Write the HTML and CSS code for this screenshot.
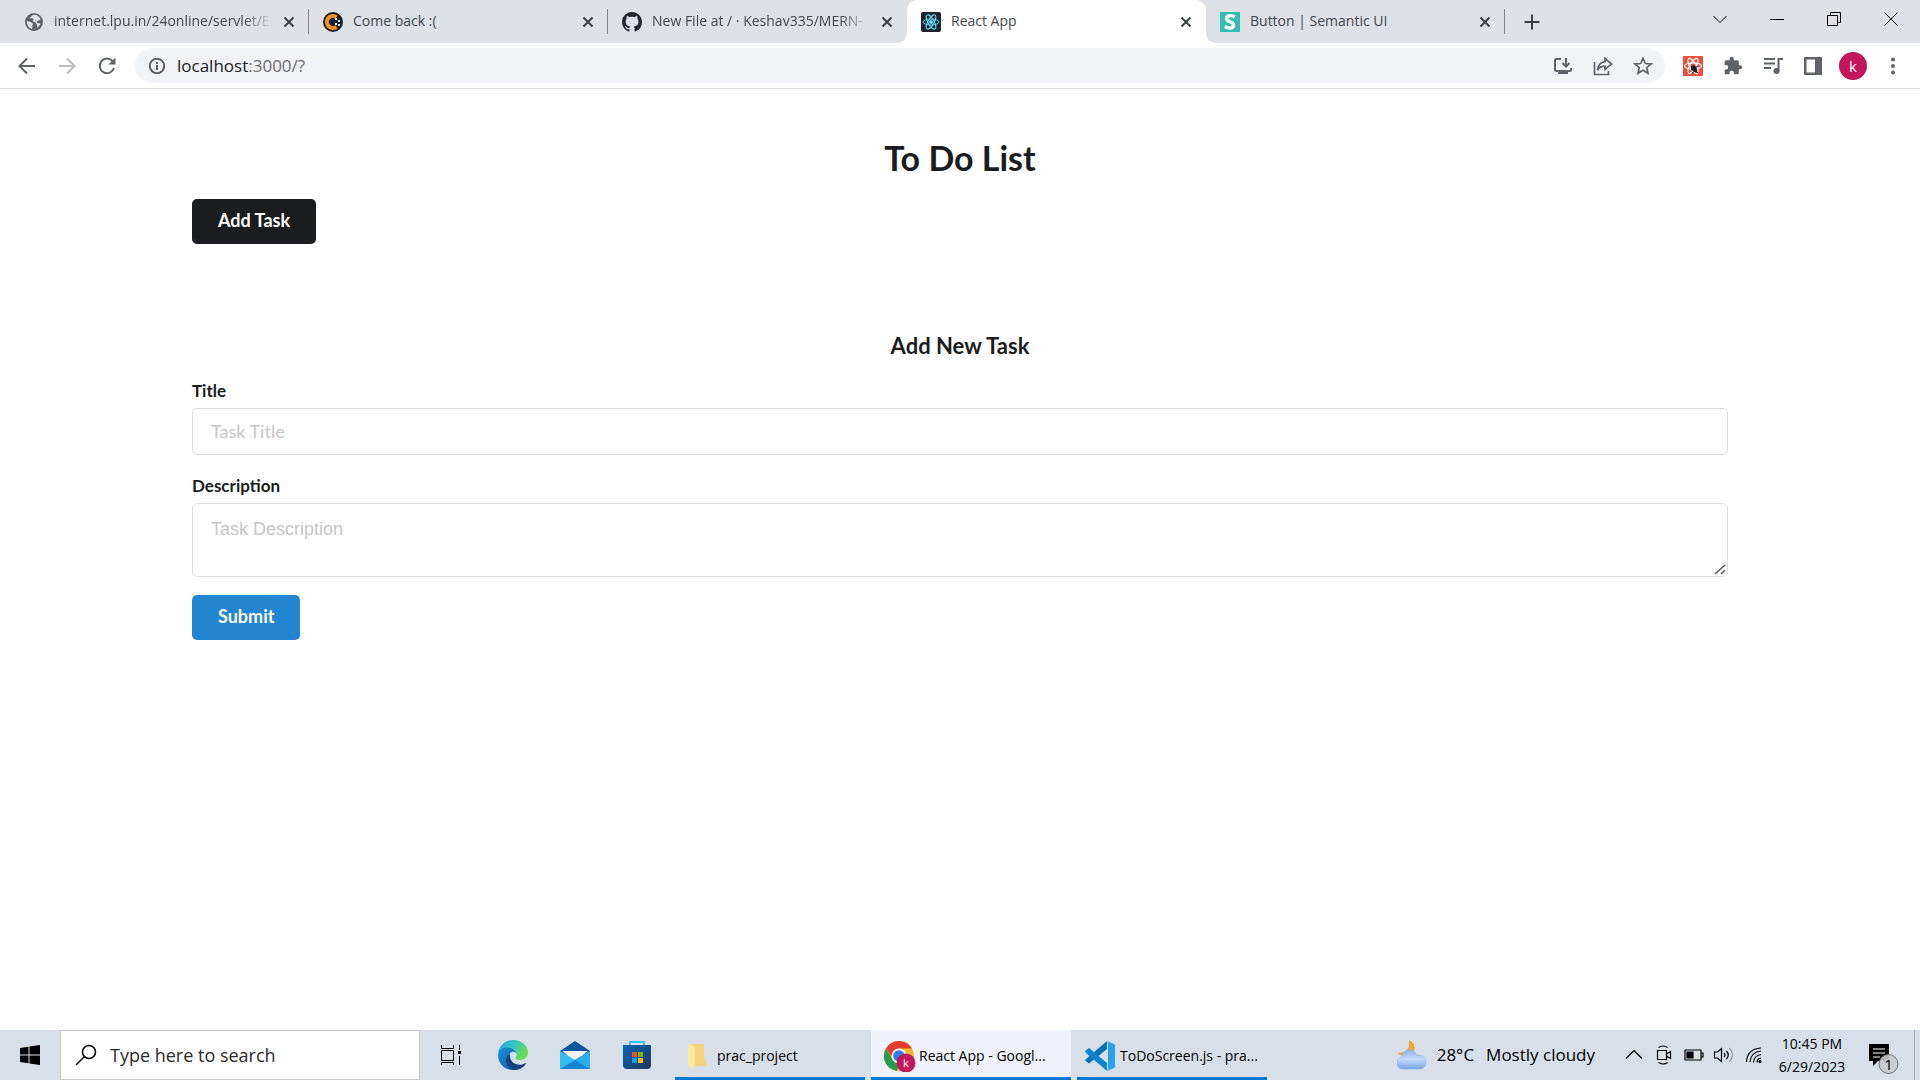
FILE: index.html
```html
<!DOCTYPE html>
<html lang="en">
<head>
<meta charset="utf-8">
<meta name="viewport" content="width=device-width, initial-scale=1">
<title>React App</title>
<link rel="stylesheet" href="styles.css">
</head>
<body>
<header class="browser">
  <div class="tab-strip">
    <div class="tab">
      <svg class="tab-icon" viewBox="0 0 20 20"><circle cx="10" cy="10" r="9" fill="#5f6368"/><path d="M3 9c2 0 3 1 4.500 1.500s2 1.500 1 2.500.5 2-.5 4C5 16 2.500 13 3 9zM9 3c3-1 6 1 7.500 4-1 2-2.500 1-3.500 2.500s1.500 2 3.500 1.500c-.5 2-1.500 3.500-3 4.500-1-1.500 0-3-1.500-4.500S8 9.500 9 8s-1-2-2.500-1.500S7 4 9 3z" fill="#dee1e6"/></svg>
      <a class="tab-title faded" href="#">internet.lpu.in/24online/servlet/E2</a>
      <button class="tab-close" aria-label="Close tab"><svg viewBox="0 0 12 12"><path d="M1.500 1.500l9 9M10.500 1.500l-9 9"/></svg></button>
    </div>
    <div class="tab">
      <svg class="tab-icon" viewBox="0 0 20 20"><circle cx="10" cy="10" r="10" fill="#17202e"/><path d="M13.500 5.200A6 6 0 1 0 13.500 14.800" fill="none" stroke="#f7931e" stroke-width="4"/><g fill="#fff"><rect x="12" y="6" width="2" height="2"/><rect x="15" y="8" width="2" height="2"/><rect x="15" y="12" width="2" height="2"/><rect x="12" y="11" width="2" height="2"/></g></svg>
      <a class="tab-title" href="#">Come back :(</a>
      <button class="tab-close" aria-label="Close tab"><svg viewBox="0 0 12 12"><path d="M1.500 1.500l9 9M10.500 1.500l-9 9"/></svg></button>
    </div>
    <div class="tab before-active">
      <svg class="tab-icon" viewBox="0 0 16 16"><path fill="#24292f" d="M8 0C3.580 0 0 3.580 0 8c0 3.540 2.290 6.530 5.470 7.590.4.070.55-.17.55-.38 0-.19-.01-.82-.01-1.490-2.010.37-2.530-.49-2.690-.94-.09-.23-.48-.94-.82-1.130-.28-.15-.68-.52-.01-.53.63-.01 1.080.58 1.230.82.72 1.210 1.870.87 2.330.66.070-.52.28-.87.51-1.070-1.780-.2-3.640-.89-3.640-3.950 0-.87.31-1.590.82-2.150-.08-.2-.36-1.020.08-2.120 0 0 .67-.21 2.200.82.64-.18 1.320-.27 2-.27s1.360.09 2 .27c1.530-1.040 2.200-.82 2.200-.82.44 1.100.16 1.920.08 2.120.51.56.82 1.270.82 2.150 0 3.070-1.870 3.750-3.650 3.950.29.25.54.73.54 1.480 0 1.070-.01 1.930-.01 2.200 0 .21.15.46.55.38A8.010 8.010 0 0 0 16 8c0-4.420-3.580-8-8-8z"/></svg>
      <a class="tab-title faded" href="#">New File at / · Keshav335/MERN-</a>
      <button class="tab-close" aria-label="Close tab"><svg viewBox="0 0 12 12"><path d="M1.500 1.500l9 9M10.500 1.500l-9 9"/></svg></button>
    </div>
    <div class="tab active">
      <svg class="tab-icon" viewBox="0 0 20 20"><rect width="20" height="20" rx="2" fill="#20232a"/><g fill="none" stroke="#61dafb"><ellipse cx="10" cy="10" rx="8" ry="3"/><ellipse cx="10" cy="10" rx="8" ry="3" transform="rotate(60 10 10)"/><ellipse cx="10" cy="10" rx="8" ry="3" transform="rotate(120 10 10)"/></g><circle cx="10" cy="10" r="2" fill="#61dafb"/></svg>
      <a class="tab-title" href="#">React App</a>
      <button class="tab-close" aria-label="Close tab"><svg viewBox="0 0 12 12"><path d="M1.500 1.500l9 9M10.500 1.500l-9 9"/></svg></button>
    </div>
    <div class="tab">
      <svg class="tab-icon" viewBox="0 0 20 20"><rect width="20" height="20" fill="#35bdb2"/><path d="M14.800 5C12 3 6.500 3 6.500 6.500 6.500 10.500 13.500 9 13.500 13 13.500 17 8 16.500 4.800 14.500" fill="none" stroke="#fff" stroke-width="3.400"/></svg>
      <a class="tab-title" href="#">Button | Semantic UI</a>
      <button class="tab-close" aria-label="Close tab"><svg viewBox="0 0 12 12"><path d="M1.500 1.500l9 9M10.500 1.500l-9 9"/></svg></button>
    </div>
    <button class="new-tab" aria-label="New tab"><svg viewBox="0 0 16 16"><path d="M8 .5v15M.5 8h15"/></svg></button>
    <div class="window-controls">
      <button aria-label="Search tabs"><svg viewBox="0 0 14 14"><path d="M.5 4L7 10.500 13.500 4"/></svg></button>
      <button aria-label="Minimize"><svg viewBox="0 0 14 14"><path d="M0 7.500h14"/></svg></button>
      <button aria-label="Restore"><svg viewBox="0 0 14 14"><path d="M.5 3.500h10v10H.5zM3.500 3V.5h10v10H11"/></svg></button>
      <button aria-label="Close"><svg viewBox="0 0 14 14"><path d="M.5.5l13 13M13.500.5l-13 13"/></svg></button>
    </div>
  </div>
  <div class="toolbar">
    <button class="tool" aria-label="Back"><svg class="line" viewBox="0 0 20 20"><path d="M18 10H3M10 2.500L2.500 10l7.500 7.500"/></svg></button>
    <button class="tool disabled" aria-label="Forward"><svg class="line" viewBox="0 0 20 20"><path d="M2 10h15M10 2.500l7.500 7.500-7.500 7.500"/></svg></button>
    <button class="tool" aria-label="Reload"><svg class="line" viewBox="0 0 20 20"><path d="M17 12A7.300 7.300 0 1 1 15.500 5"/><path d="M18.500 1.500v7h-7z" class="solid"/></svg></button>
    <div class="omnibox">
      <svg class="info" viewBox="0 0 16 16"><circle cx="8" cy="8" r="7.200"/><path d="M8 7v5M8 4v2"/></svg>
      <div class="url" role="textbox" aria-label="Address" contenteditable="true" spellcheck="false"><span class="host">localhost</span>:3000/?</div>
      <button class="tool" aria-label="Install app"><svg class="line" viewBox="0 0 20 20"><path d="M8 3H3.500A1.500 1.500 0 0 0 2 4.500v9A1.500 1.500 0 0 0 3.500 15h13a1.500 1.500 0 0 0 1.500-1.500V12M13 2v8M9.500 7l3.500 3.500L16.500 7M5 17h10"/></svg></button>
      <button class="tool" aria-label="Share"><svg class="line thin" viewBox="0 0 20 20"><path d="M1.500 6v12.500h14V15M12 2.500l6.500 5.500L12 13.500v-3.300c-4 0-6 1.500-7.500 4C5 9.700 7.500 6.200 12 5.700z"/></svg></button>
      <button class="tool" aria-label="Bookmark this tab"><svg class="line thin" viewBox="0 0 20 20"><path d="M10 2.300l2.300 5.200 5.700.5-4.300 3.700L15 17.300l-5-3-5 3 1.300-5.600L2 8l5.700-.5z"/></svg></button>
    </div>
    <button class="tool" aria-label="React developer tools"><svg viewBox="0 0 20 20"><rect width="20" height="20" rx="1" fill="#e9503e"/><g fill="none" stroke="#fff" stroke-width="1.200"><ellipse cx="10" cy="10" rx="8.500" ry="3.200"/><ellipse cx="10" cy="10" rx="8.500" ry="3.200" transform="rotate(60 10 10)"/><ellipse cx="10" cy="10" rx="8.500" ry="3.200" transform="rotate(120 10 10)"/></g><ellipse cx="11" cy="12.500" rx="2.500" ry="3.500" fill="#1d1d1d" transform="rotate(-35 11 12.500)"/><path d="M8 10l7 7M8 14l7-4M9 17l5-3M12 10l1 7" stroke="#1d1d1d"/></svg></button>
    <button class="tool" aria-label="Extensions"><svg viewBox="0 0 24 24"><path fill="#5f6368" d="M20.500 11H19V7c0-1.100-.9-2-2-2h-4V3.500a2.500 2.500 0 0 0-5 0V5H4c-1.100 0-2 .9-2 2v3.800h1.500a2.700 2.700 0 0 1 0 5.400H2V20c0 1.100.9 2 2 2h3.800v-1.500a2.700 2.700 0 0 1 5.400 0V22H17c1.100 0 2-.9 2-2v-4h1.500a2.500 2.500 0 0 0 0-5z"/></svg></button>
    <button class="tool" aria-label="Media controls"><svg viewBox="0 0 20 20"><path fill="none" stroke="#5f6368" stroke-width="2" d="M1 3h11M1 7.500h11M1 12h7M15.500 15V3H20"/><circle cx="13.500" cy="15" r="3" fill="#5f6368"/></svg></button>
    <button class="tool" aria-label="Side panel"><svg viewBox="0 0 20 20"><path fill="#5f6368" fill-rule="evenodd" d="M1 1h18v18H1zM3.500 3.500v13H12v-13z"/></svg></button>
    <button class="tool" aria-label="Profile"><span class="avatar">k</span></button>
    <button class="tool" aria-label="Menu"><svg viewBox="0 0 20 20"><g fill="#5f6368"><circle cx="10" cy="3.500" r="2"/><circle cx="10" cy="10" r="2"/><circle cx="10" cy="16.500" r="2"/></g></svg></button>
  </div>
</header>

<main class="page">
  <h1>To Do List</h1>
  <button class="button black">Add Task</button>
  <form class="task-form">
    <h3>Add New Task</h3>
    <label for="title">Title</label>
    <input id="title" type="text" placeholder="Task Title">
    <label for="description">Description</label>
    <textarea id="description" rows="2" placeholder="Task Description"></textarea>
    <button class="button blue" type="button">Submit</button>
  </form>
</main>

<footer class="taskbar">
  <button class="start" aria-label="Start"><svg viewBox="0 0 20 20"><path d="M0 3l8.500-1.200v7.700H0zM9.500 1.600L20 0v9.500H9.500zM0 10.500h8.500v7.700L0 17zM9.500 10.500H20V20L9.500 18.400z"/></svg></button>
  <label class="search">
    <svg viewBox="0 0 22 22"><circle cx="14" cy="8" r="6.500"/><path d="M9.500 12.500L1 21"/></svg>
    <input type="search" placeholder="Type here to search" aria-label="Search">
  </label>
  <button class="pin" aria-label="Task view"><svg class="small" viewBox="0 0 20 20"><path fill="none" stroke="#000" d="M.5 0v3.500h12V0M.5 5.500h12v10H.5zM.5 20v-2.500h12V20M18.500 0v5M18.500 11v9"/><path d="M17 6h3v3h-3z"/></svg></button>
  <button class="pin" aria-label="Edge"><svg viewBox="0 0 30 30"><defs><linearGradient id="edge-top" x1="0" y1="0" x2="1" y2=".5"><stop offset="0" stop-color="#249fdd"/><stop offset=".5" stop-color="#34c4c8"/><stop offset="1" stop-color="#6ade50"/></linearGradient><linearGradient id="edge-low" x1="0" y1="0" x2="1" y2="1"><stop offset="0" stop-color="#1b8fdc"/><stop offset="1" stop-color="#0c59a4"/></linearGradient></defs><path fill="url(#edge-top)" d="M0 14C1 5 8 0 15 0c9 0 15 6 15 12.500 0 5-4 7.500-8 7.500-3 0-5-1-4.500-2.500C19 16 19 14 18 12.500 13 6 3 7 0 14z"/><path fill="url(#edge-low)" d="M0 15C1 9 5 7 10 7.500c4.500.5 7.500 3 8 6-1-2-4.500-2.500-6 0-2 3-1 9 3 12.500 2.500 2 5 2.500 7 2-2 1.500-4.500 2-7 2C6.500 30 0 23.500 0 15z"/><path fill="#12437f" d="M12 14c-1 7 5 12 12 10.500 2-.4 3.500-1.500 4.500-1.500C26 27.500 21 30 16 30c-5-1-8-5-8-9.500 0-3 2-5.500 4-6.500z"/></svg></button>
  <button class="pin" aria-label="Mail"><svg viewBox="0 0 30 30"><path fill="#0a559d" d="M0 11L15 1l15 10v4H0z"/><path fill="#f3f3f3" d="M2 11h26l-13 10z"/><path fill="#35bdf1" d="M0 11l15 9 15-9v18H0z"/><path fill="#1686d4" d="M0 29l20-12 10 12z"/><path fill="#2baeea" d="M15 20l15-9v18z"/></svg></button>
  <button class="pin" aria-label="Store"><svg viewBox="0 0 30 30"><defs><linearGradient id="store-bag" x1="0" y1="0" x2="1" y2="1"><stop offset="0" stop-color="#0867b4"/><stop offset="1" stop-color="#20365c"/></linearGradient></defs><path fill="none" stroke="#35bff0" stroke-width="1.800" d="M8 6V2h14v4"/><path fill="url(#store-bag)" d="M1 5h28v20q0 4-4 4H5q-4 0-4-4z"/><path fill="#f25022" d="M10 12h5v5h-5z"/><path fill="#7fba00" d="M16 12h5v5h-5z"/><path fill="#00a4ef" d="M10 18h5v5h-5z"/><path fill="#ffb900" d="M16 18h5v5h-5z"/></svg></button>
  <div class="tasks">
    <button class="task folder"><svg viewBox="0 0 30 30"><path fill="#f5d57c" d="M9 3h13v14l2 3v5H9z"/><path fill="#fbe6a2" d="M6 3h2l5 3v20l-2 2-5-3z"/></svg><span>prac_project</span></button>
    <button class="task current"><svg viewBox="0 0 32 32"><circle cx="15" cy="16" r="15" fill="#f9bb2d"/><path fill="#e33b2e" d="M15 1a15 15 0 0 1 13 7.500H15L8.500 18 2 8.500A15 15 0 0 1 15 1z"/><path fill="#2a9a48" d="M2 8.500L8.500 19.500 15 23.500 13 31A15 15 0 0 1 2 8.500z"/><circle cx="15" cy="16" r="7.500" fill="#fff"/><circle cx="15" cy="16" r="5.800" fill="#3478e5"/><circle cx="22" cy="23" r="9.500" fill="#c2185b"/><text class="badge-letter" x="22" y="27" text-anchor="middle">k</text></svg><span>React App - Googl...</span></button>
    <button class="task code"><svg viewBox="0 0 30 30"><path fill="#0872b9" d="M22 0v8L4 22.500 0 19.500 1 18z"/><path fill="#0c86d1" d="M1 12l-1-2 4-3L22 22v8z"/><path fill="#26a3ec" d="M22 0l8 3.500v23L22 30q1-.5 1-2V2q0-1.500-1-2z"/></svg><span>ToDoScreen.js - pra...</span></button>
  </div>
  <div class="tray">
    <button class="weather"><svg viewBox="0 0 30 30"><defs><linearGradient id="cloud" x1="0" y1="0" x2="0" y2="1"><stop offset="0" stop-color="#8bb3ec"/><stop offset=".5" stop-color="#c5dbfa"/><stop offset="1" stop-color="#76a5e8"/></linearGradient></defs><path fill="#f2a32c" d="M12 0c6 3 7 9 4 13s-11 5-15 0c9 0 12-5 11-13z"/><path fill="url(#cloud)" stroke="#84aeea" stroke-width=".6" d="M6 29a6 6 0 0 1-.5-12C5 12 10 9 14 10c3 .5 5 3 5.500 5.500 4-1 9 .5 9.500 6.500 0 4-2.500 7-6 7z"/></svg><span>28°C</span><span>Mostly cloudy</span></button>
    <button class="tray-icon" aria-label="Show hidden icons"><svg viewBox="0 0 20 20"><path d="M2 13.500l8-8 8 8"/></svg></button>
    <button class="tray-icon" aria-label="Meet now"><svg viewBox="0 0 20 20"><path d="M3.500 5.500h9v9h-9zM12.500 9l4-2.500v7l-4-2.500M4.500 2.500q5-3 9 0M4.500 17.500q5 3 9 0"/></svg></button>
    <button class="tray-icon" aria-label="Battery"><svg viewBox="0 0 20 20"><path d="M1 5h16v10H1zM17 8h2v4h-2"/><path d="M3 7h6v6H3z" class="fill"/></svg></button>
    <button class="tray-icon" aria-label="Volume"><svg viewBox="0 0 20 20"><path d="M.5 7h3L7.500 3.500v13L3.500 13h-3zM10 8q2 2 0 4M12.500 6q3.500 4 0 8"/><path class="muted" d="M15.500 3q6 7 0 14"/></svg></button>
    <button class="tray-icon" aria-label="Network"><svg viewBox="0 0 20 20"><path d="M6 17Q7 7 17 6M9.500 17.500Q10 10.500 17 9.500M13 17.500q0-4 4-4.500"/><path d="M2.500 17Q3 4 17 3"/><circle class="fill" cx="16" cy="16.500" r="1"/></svg></button>
    <button class="clock"><span>10:45 PM</span><span>6/29/2023</span></button>
    <button class="notifications" aria-label="Notifications"><svg viewBox="0 0 32 32"><path d="M0 0h20v17H9l-5 5v-5H0z"/><path d="M4 5h12M4 9h12M4 13h7" stroke="#fff" stroke-width="1.200"/><circle cx="19.500" cy="20" r="9.500" fill="#c8cacd" fill-opacity=".9" stroke="#6f7276"/><text class="count" x="19.500" y="26" text-anchor="middle">1</text></svg></button>
  </div>
</footer>
</body>
</html>
```
FILE: styles.css
```css
* { box-sizing: border-box; }

body {
  margin: 0;
  min-height: 100vh;
  display: flex;
  flex-direction: column;
  background: #fff;
  font-family: "Open Sans", "Noto Sans", sans-serif;
  color: #000;
}

button {
  margin: 0;
  padding: 0;
  border: 0;
  background: none;
  font: inherit;
  color: inherit;
  cursor: pointer;
}

svg { display: block; flex: none; }

/* Browser tabs */
.tab-strip {
  display: flex;
  height: 43px;
  padding: 0 1px 0 10px;
  background: #dee1e6;
}

.tab {
  position: relative;
  flex: 0 1 299px;
  min-width: 0;
  display: flex;
  align-items: center;
  padding: 0 8px 0 14px;
}

.tab::after {
  content: "";
  position: absolute;
  right: 0;
  top: 9px;
  width: 1px;
  height: 25px;
  background: #80868b;
}

.tab.active {
  background: #fff;
  border-radius: 10px 10px 0 0;
}

.tab.before-active::after { display: none; }

.tab.active::before,
.tab.active::after {
  content: "";
  position: absolute;
  top: auto;
  bottom: 0;
  width: 10px;
  height: 10px;
}

.tab.active::before {
  left: -10px;
  background: radial-gradient(circle at 0 0, transparent 10px, #fff 10px);
}

.tab.active::after {
  right: -10px;
  background: radial-gradient(circle at 100% 0, transparent 10px, #fff 10px);
}

.tab-icon { width: 20px; height: 20px; margin-right: 10px; }

.tab-title {
  flex: 1;
  overflow: hidden;
  padding-bottom: 2px;
  white-space: nowrap;
  font-size: 14px;
  line-height: 20px;
  color: #45484c;
  text-decoration: none;
}

.tab-title.faded {
  -webkit-mask-image: linear-gradient(to left, transparent 0, #000 30px);
  mask-image: linear-gradient(to left, transparent 0, #000 30px);
}

.tab-close {
  width: 24px;
  height: 24px;
  margin-left: 4px;
  display: grid;
  place-items: center;
}

.tab-close svg { width: 12px; height: 12px; stroke: #3c4043; stroke-width: 2; }

.new-tab { width: 54px; display: grid; place-items: center; }
.new-tab svg { width: 16px; height: 16px; stroke: #3c4043; stroke-width: 2; }

.window-controls { display: flex; height: 37px; margin-left: auto; }
.window-controls button { width: 57px; display: grid; place-items: center; }
.window-controls svg { width: 14px; height: 14px; fill: none; stroke: #000; }

/* Browser toolbar */
.toolbar {
  display: flex;
  align-items: center;
  height: 46px;
  padding: 0 7px;
  border-bottom: 1px solid #dadce0;
}

.tool {
  flex: none;
  width: 40px;
  height: 35px;
  display: grid;
  place-items: center;
}

.tool svg { width: 20px; height: 20px; }
.line { fill: none; stroke: #5f6368; stroke-width: 2; }
.line.thin { stroke-width: 1.700; }
.solid { fill: #5f6368; stroke: none; }
.disabled .line { stroke: #bbbdc0; }

.omnibox {
  flex: 1;
  display: flex;
  align-items: center;
  height: 35px;
  margin: 0 8px;
  padding: 0 2px 0 14px;
  border-radius: 18px;
  background: #f1f3f4;
}

.info { width: 16px; height: 16px; fill: none; stroke: #5f6368; stroke-width: 2; }

.url {
  flex: 1;
  margin-left: 12px;
  font-size: 17px;
  line-height: 24px;
  color: #696d71;
  outline: 0;
}

.host { color: #202124; }

.avatar {
  width: 28px;
  height: 28px;
  border-radius: 50%;
  background: #c2185b;
  color: #fff;
  font-size: 15px;
  line-height: 28px;
}

/* To-do page */
.page {
  flex: 1;
  padding: 48px 10%;
  font-family: Lato, "Liberation Sans", sans-serif;
  color: #1b1c1d;
}

h1 {
  margin: 0 0 20px;
  font-size: 34px;
  line-height: 42px;
  text-align: center;
}

.button {
  display: block;
  height: 45px;
  padding: 0 26px 3px;
  border-radius: 5px;
  font-size: 18px;
  font-weight: 700;
  line-height: 20px;
  color: #fff;
}

.black { background: #1b1c1d; }
.blue { background: #2185d0; }

.task-form { margin-top: 87px; }

h3 {
  margin: 0 0 18px;
  font-size: 22px;
  line-height: 29px;
  text-align: center;
}

.task-form label {
  display: block;
  margin-bottom: 5px;
  font-size: 17px;
  font-weight: 700;
  line-height: 25px;
}

.task-form input,
.task-form textarea {
  display: block;
  width: 100%;
  margin: 0 0 18px;
  padding: 0 18px 2px;
  border: 1px solid #dededf;
  border-radius: 5px;
  font-family: inherit;
  font-size: 18px;
  line-height: 22px;
  color: inherit;
  outline: 0;
}

.task-form input { height: 47px; }

.task-form textarea {
  height: 74px;
  padding: 14px 18px;
  font-family: "Liberation Sans", Arial, sans-serif;
  resize: vertical;
}

.task-form textarea::-webkit-resizer {
  background: url("data:image/svg+xml,%3Csvg xmlns='http://www.w3.org/2000/svg' width='15' height='15'%3E%3Cpath d='M3 13L13 4M9 13l4-4' stroke='%23555' stroke-width='1.500'/%3E%3C/svg%3E") no-repeat;
}

.task-form ::placeholder { color: #c7c7c7; }

/* Desktop taskbar */
.taskbar {
  display: flex;
  height: 50px;
  background: #d8dfe9;
}

.taskbar button { flex: none; }
.start { width: 60px; display: grid; place-items: center; }
.start svg { width: 20px; height: 20px; }

.search {
  flex: 0 1 360px;
  display: flex;
  align-items: center;
  padding-left: 14px;
  border: 1px solid #c8c6c6;
  background: #fff;
}

.search svg { width: 22px; height: 22px; fill: none; stroke: #000; stroke-width: 1.500; }

.search input {
  flex: 1;
  min-width: 0;
  margin-left: 13px;
  padding: 0;
  border: 0;
  outline: 0;
  background: none;
  font: 18px/24px "Open Sans", "Noto Sans", sans-serif;
}

.search ::placeholder { color: #2b2b2b; }

.pin { width: 62px; display: grid; place-items: center; }
.pin svg { width: 30px; height: 30px; }
.pin svg.small { width: 20px; height: 20px; }

.tasks { display: flex; gap: 6px; margin-left: 7px; }

.task {
  display: flex;
  align-items: center;
  width: 190px;
  padding-top: 4px;
  border-bottom: 3px solid #0078d7;
  font-size: 14px;
  line-height: 20px;
  text-align: left;
  white-space: nowrap;
}

.task svg { width: 30px; height: 30px; }
.folder { padding-left: 7px; }
.folder span { margin-left: 5px; }
.current { width: 200px; padding-left: 13px; background: #eff2f8; }
.current svg { width: 32px; height: 32px; }
.current span { margin-left: 3px; }
.code { padding-left: 8px; }
.code span { margin-left: 5px; }
.badge-letter { font-size: 11px; fill: #fff; }

.tray { display: flex; align-items: stretch; margin-left: auto; }

.weather {
  display: flex;
  align-items: center;
  font-size: 17px;
  line-height: 24px;
  margin-right: 24px;
}

.weather svg { width: 30px; height: 30px; margin-right: 10px; }
.weather span + span { margin-left: 12px; }

.tray-icon { width: 30px; display: grid; place-items: center; }
.tray-icon svg { width: 20px; height: 20px; fill: none; stroke: #000; stroke-width: 1.200; }
.tray-icon .fill { fill: #000; }
.tray-icon .muted { stroke: #969ba2; }

.clock {
  width: 86px;
  display: flex;
  flex-direction: column;
  align-items: center;
  padding-top: 2px;
  font-size: 14px;
  line-height: 23px;
}

.notifications {
  width: 60px;
  margin-right: 5px;
  padding: 10px 0 0 14px;
  border-right: 1px solid #a5abb4;
}

.taskbar .notifications svg { width: 32px; height: 32px; }
.count { font-size: 15px; }
```
